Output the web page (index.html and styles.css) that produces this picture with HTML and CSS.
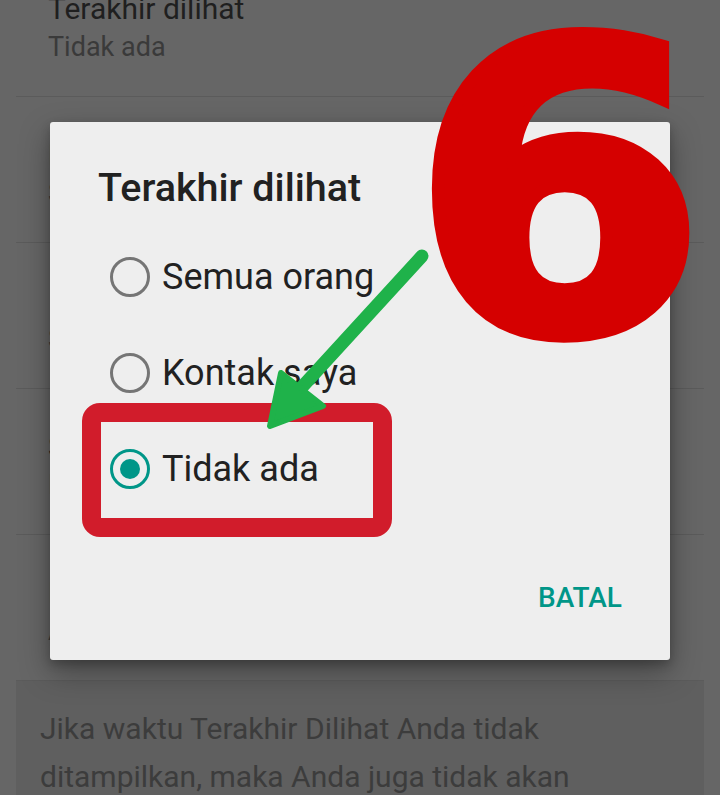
FILE: index.html
```html
<!DOCTYPE html>
<html lang="id">
<head>
  <meta charset="UTF-8">
  <title>Privasi - Terakhir dilihat</title>
  <link rel="stylesheet" href="styles.css">
</head>
<body>
  <div class="screen">
    <ul class="settings">
      <li class="setting">
        <div class="setting-title">Terakhir dilihat</div>
        <div class="setting-value">Tidak ada</div>
      </li>
      <li class="setting">
        <div class="setting-title">Foto profil</div>
        <div class="setting-value">Semua orang</div>
      </li>
      <li class="setting">
        <div class="setting-title">Info</div>
        <div class="setting-value">Semua orang</div>
      </li>
      <li class="setting">
        <div class="setting-title">Status</div>
        <div class="setting-value">Kontak saya</div>
      </li>
      <li class="setting">
        <div class="setting-title">Laporan dibaca</div>
        <div class="setting-value">Aktif</div>
      </li>
    </ul>

    <div class="note">
      <p>Jika waktu Terakhir Dilihat Anda tidak ditampilkan, maka Anda juga tidak akan dapat melihat waktu Terakhir Dilihat orang lain.</p>
    </div>

    <div class="dialog">
      <h2 class="dialog-title">Terakhir dilihat</h2>
      <div class="options">
        <label class="option">
          <span class="radio"></span>
          <span>Semua orang</span>
        </label>
        <label class="option">
          <span class="radio"></span>
          <span>Kontak saya</span>
        </label>
        <label class="option">
          <span class="radio checked"></span>
          <span>Tidak ada</span>
        </label>
      </div>
      <div class="actions">
        <span class="btn">BATAL</span>
      </div>
    </div>

    <!-- annotations drawn over the screenshot -->
    <div class="mark-box"></div>
    <svg class="mark-arrow" width="720" height="795" viewBox="0 0 720 795">
      <line x1="422" y1="256" x2="292" y2="398" stroke="#1fb24a" stroke-width="13" stroke-linecap="round"/>
      <polygon points="281,373 323,406 270,426" fill="#1fb24a" stroke="#1fb24a" stroke-width="6" stroke-linejoin="round"/>
    </svg>
    <div class="mark-num">6</div>
  </div>
</body>
</html>
```

FILE: styles.css
```css
body {
  margin: 0;
  background: #666;
  font-family: Roboto, "Noto Sans", sans-serif;
}
.screen {
  position: relative;
  width: 720px;
  height: 795px;
  overflow: hidden;
}
.settings {
  list-style: none;
  margin: -49px 16px 0;
  padding: 0;
}
.setting {
  box-sizing: border-box;
  height: 146px;
  padding: 38px 32px 0;
  border-bottom: 1px solid #5b5b5b;
}
.setting-title {
  font-size: 30px;
  line-height: 40px;
  color: #1f1f1f;
}
.setting-value {
  font-size: 27px;
  line-height: 36px;
  color: #3a3a3a;
}
.note {
  margin: 0 16px;
  padding: 24px 24px 0;
  background: #5f5f5f;
  height: 200px;
}
.note p {
  max-width: 575px;
  margin: 0;
  font-size: 30px;
  line-height: 48px;
  color: #3c3c3c;
}

.dialog {
  position: absolute;
  top: 122px;
  left: 50px;
  width: 620px;
  box-sizing: border-box;
  padding: 44px 48px 44px;
  background: #eee;
  border-radius: 3px;
  box-shadow: 0 12px 30px rgba(0,0,0,0.35), 0 4px 10px rgba(0,0,0,0.2);
}
.dialog-title {
  margin: 0 0 19px;
  font-size: 39.5px;
  line-height: 44px;
  font-weight: 500;
  color: #212121;
}
.option {
  display: flex;
  align-items: center;
  gap: 12px;
  height: 96px;
  padding-left: 12px;
  font-size: 36px;
  color: #212121;
}
.radio {
  width: 40px;
  height: 40px;
  box-sizing: border-box;
  border: 3.5px solid #757575;
  border-radius: 50%;
  display: flex;
  align-items: center;
  justify-content: center;
}
.radio.checked {
  border-color: #009688;
}
.radio.checked::after {
  content: "";
  width: 20px;
  height: 20px;
  border-radius: 50%;
  background: #009688;
}
.actions {
  display: flex;
  justify-content: flex-end;
  margin-top: 63px;
}
.btn {
  font-size: 28px;
  line-height: 36px;
  font-weight: 500;
  color: #009688;
}

.mark-box {
  position: absolute;
  left: 82px;
  top: 403px;
  width: 310px;
  height: 134px;
  box-sizing: border-box;
  border: 19px solid #d11c2b;
  border-radius: 18px;
}
.mark-arrow {
  position: absolute;
  left: 0;
  top: 0;
}
.mark-num {
  position: absolute;
  left: 412px;
  top: -9px;
  font-family: "DejaVu Sans", sans-serif;
  font-weight: 700;
  font-size: 402px;
  line-height: 402px;
  color: #d50000;
  -webkit-text-stroke: 12px #d50000;
  transform: scaleX(1.05);
  transform-origin: left top;
}
```
